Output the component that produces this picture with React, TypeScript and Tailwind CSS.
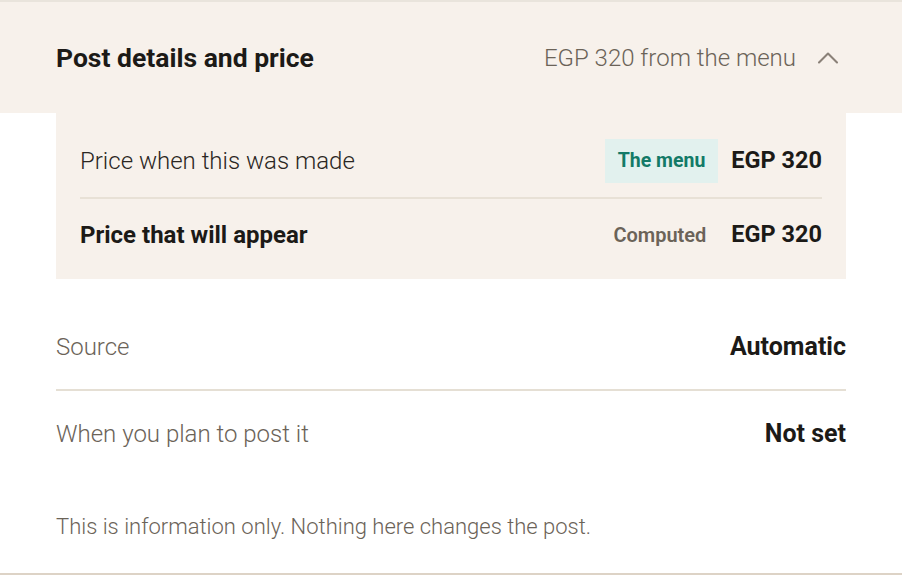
import { ChevronUp } from 'lucide-react'

const font = { fontFamily: 'Roboto, "Noto Sans", sans-serif' }

function DetailRow({ label, value, last }: { label: string; value: string; last?: boolean }) {
  return (
    <div className={`flex items-center justify-between h-[86px] ${last ? '' : 'border-b-2 border-[#e5dfd4]'}`}>
      <span className="text-[24px] font-light text-[#6b6358]">{label}</span>
      <span className="text-[25px] font-bold text-[#1c1a17]">{value}</span>
    </div>
  )
}

export default function App() {
  return (
    <div className="w-[902px] h-[580px] bg-white border-t-2 border-[#e9e4dc]" style={font}>
      {/* Header */}
      <div className="bg-[#f7f1eb] h-[111px] flex items-center justify-between pl-14 pr-14">
        <h2 className="text-[26.5px] font-bold text-[#1c1a17]">Post details and price</h2>
        <div className="flex items-center gap-[14px]">
          <span className="text-[24px] font-light text-[#6b6358]">EGP 320 from the menu</span>
          <ChevronUp className="w-9 h-9 text-[#8a8178]" strokeWidth={1.4} />
        </div>
      </div>

      <div className="px-14">
        {/* Price panel */}
        <div className="bg-[#f7f1eb] px-6 pb-[12px]">
          <div className="flex items-center justify-between h-[86px] pt-[11px] border-b-2 border-[#e8e1d6]">
            <span className="text-[24px] font-light text-[#2a2622]">Price when this was made</span>
            <div className="flex items-center gap-[13px]">
              <span className="bg-[#e2f1ee] text-[#137a67] text-[19.5px] font-bold px-[13px] h-[44px] flex items-center">The menu</span>
              <span className="text-[23.5px] font-bold text-[#1c1a17]">EGP 320</span>
            </div>
          </div>
          <div className="flex items-center justify-between h-[68px] pt-[3px]">
            <span className="text-[24px] font-bold text-[#1c1a17]">Price that will appear</span>
            <div className="flex items-center gap-[25px]">
              <span className="text-[20px] font-semibold text-[#6b6358]">Computed</span>
              <span className="text-[23.5px] font-bold text-[#1c1a17]">EGP 320</span>
            </div>
          </div>
        </div>

        {/* Details */}
        <div className="pt-[26px]">
          <DetailRow label="Source" value="Automatic" />
          <DetailRow label="When you plan to post it" value="Not set" last />
        </div>

        <p className="text-[22px] leading-[30px] font-light text-[#6b6358] mt-[35px]">
          This is information only. Nothing here changes the post.
        </p>
      </div>

      <div className="mt-[31px] border-b-2 border-[#ddd3c6]" />
    </div>
  )
}
